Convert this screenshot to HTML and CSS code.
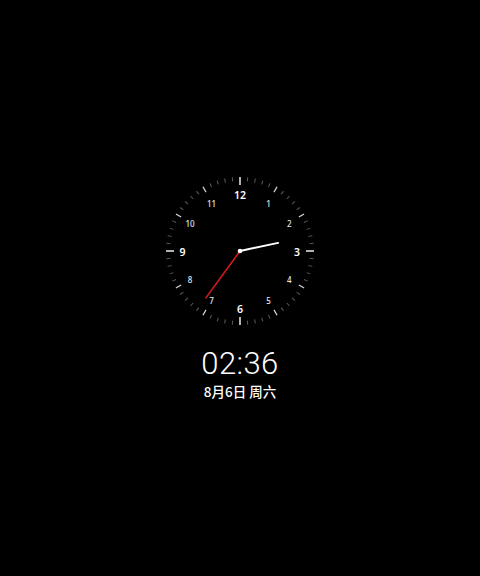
FILE: index.html
```html
<!DOCTYPE html>
<html lang="zh">
<head>
<meta charset="utf-8">
<link rel="stylesheet" href="styles.css">
</head>
<body>
<div class="screen">
  <svg class="clock" width="160" height="160" viewBox="-80 -80 160 160">
    <defs>
      <line id="m" class="tick-minor" x1="0" y1="-74" x2="0" y2="-70"/>
      <line id="f" class="tick-five" x1="0" y1="-74" x2="0" y2="-68"/>
      <line id="q" class="tick-quarter" x1="0" y1="-74" x2="0" y2="-66"/>
    </defs>
    <g>
      <use href="#q" transform="rotate(0)"/><use href="#m" transform="rotate(6)"/><use href="#m" transform="rotate(12)"/><use href="#m" transform="rotate(18)"/><use href="#m" transform="rotate(24)"/>
      <use href="#f" transform="rotate(30)"/><use href="#m" transform="rotate(36)"/><use href="#m" transform="rotate(42)"/><use href="#m" transform="rotate(48)"/><use href="#m" transform="rotate(54)"/>
      <use href="#f" transform="rotate(60)"/><use href="#m" transform="rotate(66)"/><use href="#m" transform="rotate(72)"/><use href="#m" transform="rotate(78)"/><use href="#m" transform="rotate(84)"/>
      <use href="#q" transform="rotate(90)"/><use href="#m" transform="rotate(96)"/><use href="#m" transform="rotate(102)"/><use href="#m" transform="rotate(108)"/><use href="#m" transform="rotate(114)"/>
      <use href="#f" transform="rotate(120)"/><use href="#m" transform="rotate(126)"/><use href="#m" transform="rotate(132)"/><use href="#m" transform="rotate(138)"/><use href="#m" transform="rotate(144)"/>
      <use href="#f" transform="rotate(150)"/><use href="#m" transform="rotate(156)"/><use href="#m" transform="rotate(162)"/><use href="#m" transform="rotate(168)"/><use href="#m" transform="rotate(174)"/>
      <use href="#q" transform="rotate(180)"/><use href="#m" transform="rotate(186)"/><use href="#m" transform="rotate(192)"/><use href="#m" transform="rotate(198)"/><use href="#m" transform="rotate(204)"/>
      <use href="#f" transform="rotate(210)"/><use href="#m" transform="rotate(216)"/><use href="#m" transform="rotate(222)"/><use href="#m" transform="rotate(228)"/><use href="#m" transform="rotate(234)"/>
      <use href="#f" transform="rotate(240)"/><use href="#m" transform="rotate(246)"/><use href="#m" transform="rotate(252)"/><use href="#m" transform="rotate(258)"/><use href="#m" transform="rotate(264)"/>
      <use href="#q" transform="rotate(270)"/><use href="#m" transform="rotate(276)"/><use href="#m" transform="rotate(282)"/><use href="#m" transform="rotate(288)"/><use href="#m" transform="rotate(294)"/>
      <use href="#f" transform="rotate(300)"/><use href="#m" transform="rotate(306)"/><use href="#m" transform="rotate(312)"/><use href="#m" transform="rotate(318)"/><use href="#m" transform="rotate(324)"/>
      <use href="#f" transform="rotate(330)"/><use href="#m" transform="rotate(336)"/><use href="#m" transform="rotate(342)"/><use href="#m" transform="rotate(348)"/><use href="#m" transform="rotate(354)"/>
    </g>
    <g class="num">
      <text x="28.5" y="-48">1</text>
      <text x="49.4" y="-28">2</text>
      <text class="big" x="57" y="0.5">3</text>
      <text x="49.4" y="28.5">4</text>
      <text x="28.5" y="49">5</text>
      <text class="big" x="0" y="57.5">6</text>
      <text x="-28.5" y="49">7</text>
      <text x="-50" y="28.5">8</text>
      <text class="big" x="-57.5" y="0.5">9</text>
      <text x="-50" y="-28">10</text>
      <text x="-28.5" y="-48">11</text>
      <text class="big" x="0" y="-56.5">12</text>
    </g>
    <line class="hand-hour" x1="0" y1="0" x2="0" y2="-39" transform="rotate(78)"/>
    <line class="hand-min" x1="0" y1="0" x2="0" y2="-58" transform="rotate(216)"/>
    <circle class="pin" cx="0" cy="0" r="2.3"/>
  </svg>
  <div class="time">02:36</div>
  <div class="date">8月6日&nbsp;周六</div>
</div>
</body>
</html>
```
FILE: styles.css
```css
html, body {
  margin: 0;
  padding: 0;
  background: #000;
}
.screen {
  width: 480px;
  height: 576px;
  display: flex;
  flex-direction: column;
  align-items: center;
  padding-top: 171px;
  box-sizing: border-box;
  color: #fff;
}
.clock {
  display: block;
  overflow: visible;
}
.tick-minor {
  stroke: #5a5a5a;
  stroke-width: 1;
}
.tick-five {
  stroke: #d8d8d8;
  stroke-width: 1.2;
}
.tick-quarter {
  stroke: #ffffff;
  stroke-width: 1.4;
}
.num text {
  fill: #e6e6e6;
  font-family: "Noto Sans", "Liberation Sans", sans-serif;
  font-size: 8px;
  font-weight: 500;
  text-anchor: middle;
  dominant-baseline: central;
}
.num text.big {
  fill: #fff;
  font-size: 10.5px;
  font-weight: 600;
}
.hand-hour {
  stroke: #fff;
  stroke-width: 2;
  stroke-linecap: round;
}
.hand-min {
  stroke: #e01b1b;
  stroke-width: 1.5;
  stroke-linecap: round;
}
.pin {
  fill: #fff;
}
.time {
  margin-top: 15px;
  font-family: Roboto, "Noto Sans", sans-serif;
  font-weight: 300;
  font-size: 31px;
  line-height: 36px;
  letter-spacing: 0.4px;
}
.date {
  margin-top: 0;
  font-family: "Noto Sans CJK SC", "Noto Sans", sans-serif;
  font-weight: 500;
  font-size: 13.5px;
  line-height: 18px;
}
```
